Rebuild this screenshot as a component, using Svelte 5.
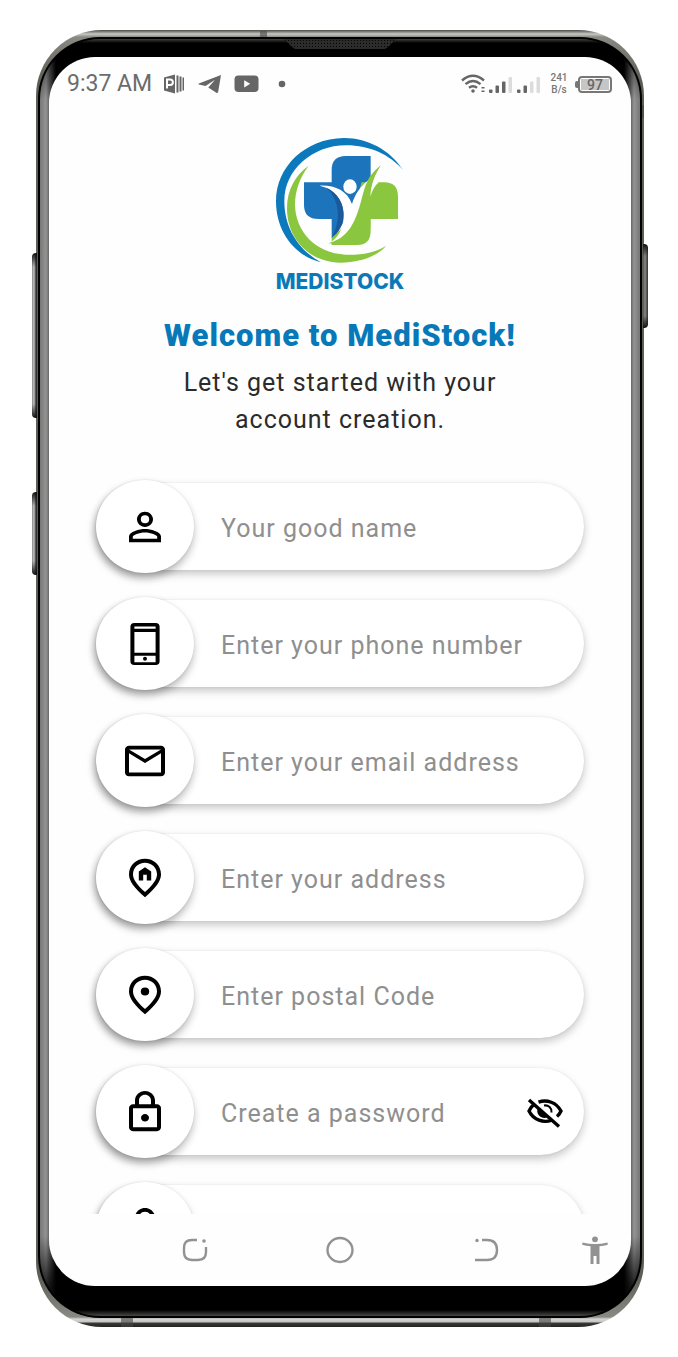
<script>
  const fields = [
    { id: 'name', label: 'Your good name', type: 'text', icon: 'person' },
    { id: 'phone', label: 'Enter your phone number', type: 'tel', icon: 'phone' },
    { id: 'email', label: 'Enter your email address', type: 'email', icon: 'mail' },
    { id: 'address', label: 'Enter your address', type: 'text', icon: 'home' },
    { id: 'postal', label: 'Enter postal Code', type: 'text', icon: 'pin' },
    { id: 'password', label: 'Create a password', type: 'password', icon: 'lock', secret: true },
    { id: 'confirm', label: 'Confirm password', type: 'password', icon: 'lock' }
  ];
  let visible = $state(false);
</script>

{#snippet fieldIcon(name)}
  <svg class="icon" viewBox="0 0 24 24" preserveAspectRatio="none" aria-hidden="true">
    {#if name === 'person'}
      <path d="M12 5.9a2.1 2.1 0 1 1 0 4.2 2.1 2.1 0 0 1 0-4.2m0 9c2.97 0 6.1 1.46 6.1 2.1v1.1H5.9V17c0-.64 3.13-2.1 6.1-2.1M12 4C9.79 4 8 5.79 8 8s1.79 4 4 4 4-1.790 4-4-1.790-4-4-4zm0 9c-2.67 0-8 1.340-8 4v3h16v-3c0-2.660-5.330-4-8-4z" />
    {:else if name === 'phone'}
      <path fill-rule="evenodd" d="M6.700 1h10.600a2 2 0 0 1 2 2v18a2 2 0 0 1-2 2H6.700a2 2 0 0 1-2-2V3a2 2 0 0 1 2-2zM6.700 2.900V4h10.600V2.900zM6.700 5.800v10.700h10.600V5.800zM6.700 18.100v3.400h10.600v-3.400z" />
      <circle cx="12" cy="19.700" r="1" />
    {:else if name === 'mail'}
      <path d="M20 4H4c-1.100 0-2 .9-2 2v12c0 1.100.9 2 2 2h16c1.100 0 2-.9 2-2V6c0-1.100-.9-2-2-2zm0 14H4V8l8 5 8-5v10zm-8-7L4 6h16l-8 5z" />
    {:else if name === 'lock'}
      <path d="M18 8h-1V6c0-2.760-2.240-5-5-5S7 3.240 7 6v2H6c-1.100 0-2 .9-2 2v10c0 1.100.9 2 2 2h12c1.100 0 2-.9 2-2V10c0-1.100-.9-2-2-2zM9 6c0-1.660 1.340-3 3-3s3 1.340 3 3v2H9V6zm9 14H6V10h12v10zm-6-3c1.100 0 2-.9 2-2s-.9-2-2-2-2 .9-2 2 .9 2 2 2z" />
    {:else}
      <path fill-rule="evenodd" d="M12 2c4.200 0 8 3.220 8 8.200 0 3.320-2.670 7.250-8 11.800-5.330-4.550-8-8.480-8-11.800C4 5.220 7.800 2 12 2zm6 8.200C18 6.570 15.350 4 12 4s-6 2.570-6 6.200c0 2.340 1.950 5.440 6 9.140 4.050-3.700 6-6.800 6-9.140z" />
      {#if name === 'home'}
        <path d="M8.900 13.300V8.600L12 6.400l3.100 2.200v4.700h-2.200v-3h-1.800v3z" />
      {:else}
        <circle cx="12" cy="10.200" r="2.100" />
      {/if}
    {/if}
  </svg>
{/snippet}

<main class="stage">
  <div class="phone">
    <i class="key volume"></i>
    <i class="key assist"></i>
    <i class="key power"></i>
    <i class="seam seam-top"></i>
    <i class="seam seam-side"></i>
    <i class="seam seam-left"></i>
    <i class="seam seam-right"></i>
    <div class="rim">
      <div class="bezel">
        <i class="speaker"></i>
        <div class="screen">
          <header class="status">
            <span class="clock">9:37 AM</span>
            <svg class="s-office" width="21" height="20" viewBox="0 0 21 20" aria-hidden="true">
              <path d="M0 3.500 11 .5v19L0 16.500z" />
              <path d="M12.500 1.500h2v17h-2zM15.500 2.500h2v15h-2zM18.500 3.500H20v13h-1.500z" />
              <path class="cut" d="M3 14.500V5.500h3.200a2.700 2.700 0 0 1 0 5.400H3" />
            </svg>
            <svg class="s-plane" width="24" height="20" viewBox="0 0 24 20" aria-hidden="true">
              <path d="M23 1 .8 9.500c-.6.300-.5.700.1.900l6.600 1.600L17 5.800 10.300 13.500l8 5.200c1 .5 1.700.2 1.900-.9z" />
            </svg>
            <svg class="s-video" width="25" height="18" viewBox="0 0 25 18" aria-hidden="true">
              <rect x=".5" y=".5" width="24" height="16.500" rx="4" />
              <path class="white" d="M10.200 5.200v7.200l6-3.600z" />
            </svg>
            <svg class="s-dot" width="8" height="8" viewBox="0 0 8 8" aria-hidden="true"><circle cx="4" cy="4" r="3.300" /></svg>
            <span class="grow"></span>
            <svg width="80" height="20" viewBox="0 0 80 20" aria-hidden="true">
              <g class="wifi">
                <path d="M1 6.500Q12 -3 23 6.500" />
                <path d="M4.500 10.200Q12 4 19.500 10.200" />
                <path d="M8 13.800Q12 10.500 16 13.800" />
              </g>
              <circle cx="12" cy="17" r="1.800" />
              <path d="M20.500 13h3v1.600h-3zM20.500 16.500h3v1.600h-3z" />
              <rect x="28" y="15.500" width="3.500" height="3.500" rx="1" />
              <rect x="34.500" y="11.500" width="3.500" height="7.500" rx="1" />
              <rect x="41" y="7.500" width="3.500" height="11.500" rx="1" />
              <rect class="faint" x="47.500" y="3" width="3.500" height="16" rx="1" />
              <rect x="56" y="15.500" width="3.500" height="3.500" rx="1" />
              <rect x="62.500" y="11.500" width="3.500" height="7.500" rx="1" />
              <rect class="faint" x="69" y="7.500" width="3.500" height="11.500" rx="1" />
              <rect class="faint" x="75.500" y="3" width="3.500" height="16" rx="1" />
            </svg>
            <span class="rate">241<br />B/s</span>
            <span class="battery"><b>97</b></span>
          </header>

          <div class="scroll">
            <div class="brand">
              <svg width="128" height="127" viewBox="47 36 384 381" aria-hidden="true">
                <path fill="#0b79bb" d="M428 135C390 75 320 38 250 39 135 41 47 125 47 228c0 92 55 164 135 184C115 375 72 310 72 228 72 135 155 61 258 61c70 0 130 28 170 74z" />
                <path fill="#8bc63f" d="M145 122C105 150 80 195 80 250c0 95 70 162 160 163 60 0 110-20 138-51-35 22-80 29-122 27C165 384 106 320 104 240c0-45 16-85 41-118z" />
                <path fill="#1c75bc" d="M131 172h83v-37q0-42 42-42h75v79l-56 68-30 60-31 40v-58h-39q-44 0-44-42z" />
                <path fill="#8bc63f" d="M331 172h41q41 0 41 43v67h-82v36q0 42-41 42h-76v-20l60-60 30-108z" />
                <path fill="#fff" d="M178 182c44-2 82 14 97 55 9-30 26-54 50-72l37-44-9 53c-25 18-40 60-53 96-18 48-45 78-95 85 30-15 47-50 45-92-3-40-32-72-72-81z" />
                <path fill="#1a5a9c" d="M196 187c36 17 55 47 53 84-1 30-12 52-35 68 14-28 20-53 18-78-2-30-14-55-36-74z" />
                <path fill="#8bc63f" d="M362 121c-14 10-31 28-40 46-14 28-18 62-30 95-16 46-38 80-88 93l86 5c22-8 40-30 40-60V215c2-34 16-66 32-94z" />
                <path fill="#fff" d="M362 121c-17 25-30 56-32 94 6-20 14-33 24-43z" />
                <ellipse cx="269" cy="185" rx="20" ry="22" fill="#fff" />
              </svg>
              <strong>MEDISTOCK</strong>
            </div>
            <h1>Welcome to MediStock!</h1>
            <p>Let's get started with your<br />account creation.</p>

            <form>
              {#each fields as field}
                <div class="field">
                  <label for={field.id} aria-label={field.label}>{@render fieldIcon(field.icon)}</label>
                  <div class="pill">
                    <input
                      id={field.id}
                      type={field.secret && visible ? 'text' : field.type}
                      placeholder={field.label}
                    />
                    {#if field.secret}
                      <button type="button" aria-label="Show password" onclick={() => (visible = !visible)}>
                        <svg width="36" height="31" viewBox="0 0 36 31" aria-hidden="true">
                          <path class="line" d="M11.500 4.200C20 1 29.500 4.500 34 13c-1 2.200-2.300 4-4 5.500M7.500 6.200C5 8 3 10.200 2 13c4.500 9 14.500 12.500 23 9" />
                          <path class="thin" d="M17 7.500c4.500-.8 8 2.700 7.500 7" />
                          <path d="M11 9.500c-2.500 5.500 1.500 11.500 8.500 10.300l2-.8z" />
                          <path class="line" d="M2 2l30 26.500" />
                        </svg>
                      </button>
                    {/if}
                  </div>
                </div>
              {/each}
            </form>
          </div>

          <nav>
            <button type="button" class="recent" aria-label="Recent apps">
              <svg width="28" height="26" viewBox="0 0 28 26" aria-hidden="true">
                <path d="M16 3h-5Q3 3 3 11v4q0 8 8 8h6q8 0 8-8v-5" />
                <circle cx="23" cy="4" r="1.800" />
              </svg>
            </button>
            <button type="button" aria-label="Home">
              <svg width="28" height="28" viewBox="0 0 28 28" aria-hidden="true"><ellipse cx="14" cy="14" rx="12.500" ry="12" /></svg>
            </button>
            <button type="button" aria-label="Back">
              <svg width="26" height="26" viewBox="0 0 26 26" aria-hidden="true">
                <path d="M9 3h5q10 0 10 10t-10 10H2" />
                <circle cx="4" cy="3.500" r="1.700" />
              </svg>
            </button>
            <button type="button" class="access" aria-label="Accessibility">
              <svg width="26" height="28" viewBox="0 0 26 28" aria-hidden="true">
                <circle cx="13" cy="3.300" r="2.900" />
                <path d="M.5 6.500Q13 9.500 25.500 6.500l.3 2.300Q21.500 10 17.500 10.300V28h-3v-8h-3v8h-3V10.300Q4.500 10 .2 8.800z" />
              </svg>
            </button>
          </nav>
        </div>
      </div>
    </div>
  </div>
</main>

<style>
  :global(body) {
    margin: 0;
    background: #fff;
  }
  .stage {
    box-sizing: border-box;
    height: 100vh;
    padding: 30px 34px 30px 36px;
    font-family: Roboto, 'Liberation Sans', sans-serif;
  }
  .phone {
    position: relative;
    box-sizing: border-box;
    height: 100%;
    padding: 7px 2px 9px;
    border-radius: 66px;
    display: flex;
    background:
      linear-gradient(#4a4a46, #8a8a84 2px, #c8c8c4 4px, #8a8a84 7px, transparent 50px),
      linear-gradient(to top, #222 0, #3a3a38 4px, #c4c6c4 5px, #d4d6d4 8px, #8a8a84 10px, transparent 50px),
      #5e5e56;
  }
  .rim {
    flex: 1;
    display: flex;
    padding: 2px;
    border-radius: 62px;
    background: #000;
  }
  .bezel {
    position: relative;
    flex: 1;
    display: flex;
    padding: 18px 9px 30px;
    border-radius: 60px;
    background:
      linear-gradient(rgba(70, 70, 70, 0.9), transparent 4px),
      linear-gradient(to top, rgba(80, 80, 80, 0.9), transparent 6px),
      linear-gradient(rgba(0, 0, 0, 0.8), transparent 60px),
      linear-gradient(to top, rgba(0, 0, 0, 0.8) 30px, transparent 80px),
      linear-gradient(to right, #777, #949494 6px, #000 16px, #000 calc(100% - 16px), #949494 calc(100% - 6px), #777);
  }
  .screen {
    flex: 1;
    min-width: 0;
    display: flex;
    flex-direction: column;
    overflow: hidden;
    border-radius: 46px;
    background: #fefefe;
  }
  .key {
    position: absolute;
    width: 5px;
    left: -4px;
    background: linear-gradient(#111, transparent 14px calc(100% - 14px), #111), linear-gradient(to right, #888, #c4c4c4 2px, #333 4px);
    border-radius: 4px 0 0 4px;
  }
  .volume {
    top: 223px;
    height: 165px;
  }
  .assist {
    top: 462px;
    height: 83px;
  }
  .power {
    left: auto;
    right: -4px;
    top: 214px;
    height: 84px;
    background: linear-gradient(#111, transparent 12px calc(100% - 12px), #111), linear-gradient(to left, #333, #888 3px, #555);
    border-radius: 0 4px 4px 0;
  }
  .seam {
    position: absolute;
    background: rgba(70, 70, 70, 0.6);
  }
  .seam-top {
    left: 224px;
    top: 1px;
    width: 7px;
    height: 6px;
  }
  .seam-side {
    right: 0;
    top: 75px;
    width: 2px;
    height: 13px;
  }
  .seam-left,
  .seam-right {
    bottom: 0;
    width: 12px;
    height: 9px;
    left: 85px;
  }
  .seam-right {
    left: auto;
    right: 93px;
  }
  .speaker {
    position: absolute;
    top: 0;
    left: 50%;
    width: 112px;
    height: 10px;
    transform: translateX(-50%);
    clip-path: polygon(0 0, 100% 0, 93% 80%, 90% 100%, 10% 100%, 7% 80%);
    background: radial-gradient(circle, #050505 1px, #2c2c2c 1px) 0 0 / 3px 3px;
  }

  .status {
    box-sizing: border-box;
    flex: none;
    height: 54px;
    padding: 0 19px 0 18px;
    display: flex;
    align-items: center;
    color: #6c6c6c;
  }
  .status svg {
    flex: none;
    fill: #666;
  }
  .clock {
    font-size: 23px;
    line-height: 28px;
    white-space: nowrap;
  }
  .s-office {
    margin-left: 12px;
  }
  .s-plane {
    margin-left: 13px;
  }
  .s-video {
    margin-left: 12px;
  }
  .s-dot {
    margin-left: 19px;
  }
  .status .cut {
    fill: none;
    stroke: #fff;
    stroke-width: 2;
  }
  .status .white {
    fill: #fff;
  }
  .status .faint {
    fill: #dcdcdc;
  }
  .status .wifi {
    fill: none;
    stroke: #666;
    stroke-width: 2.4;
  }
  .grow {
    flex: 1;
  }
  .rate {
    width: 20px;
    margin-left: 8px;
    font-size: 10px;
    line-height: 12px;
    font-weight: 500;
    text-align: center;
    color: #777;
  }
  .battery {
    position: relative;
    box-sizing: border-box;
    width: 34px;
    height: 17px;
    margin-left: 9px;
    padding: 1px;
    border: 2px solid #777;
    border-radius: 4px;
    display: flex;
  }
  .battery::before {
    content: '';
    position: absolute;
    left: -5px;
    top: 3px;
    width: 3px;
    height: 7px;
    border-radius: 2px 0 0 2px;
    background: #777;
  }
  .battery b {
    flex: 1;
    background: #c6c6c6;
    font-size: 14px;
    line-height: 12px;
    font-weight: 500;
    text-align: center;
    color: #666;
  }

  .scroll {
    flex: 1;
    min-height: 0;
    overflow: hidden auto;
    scrollbar-width: none;
    padding: 26px 47px 0;
    text-align: center;
  }
  .brand {
    display: flex;
    flex-direction: column;
    align-items: center;
    gap: 8px;
  }
  .brand strong {
    font-family: Inter, sans-serif;
    font-size: 21px;
    line-height: 20px;
    font-weight: 800;
    color: #0b79b8;
  }
  h1 {
    margin: 24px 0 8px;
    font-size: 31px;
    line-height: 40px;
    font-weight: 900;
    letter-spacing: 1px;
    white-space: nowrap;
    color: #0879b8;
  }
  p {
    margin: 0;
    font-size: 25px;
    line-height: 37px;
    letter-spacing: 1px;
    color: #2b2b2b;
  }
  form {
    display: flex;
    flex-direction: column;
    gap: 24px;
    margin-top: 42px;
  }
  .field {
    display: grid;
    grid-template-columns: 98px 1fr;
    align-items: center;
  }
  .field label {
    z-index: 1;
    grid-area: 1 / 1;
    height: 93px;
    border-radius: 50%;
    display: flex;
    align-items: center;
    justify-content: center;
    background: #fff;
    box-shadow: -1px 5px 9px rgba(0, 0, 0, 0.3), 0 0 2px rgba(0, 0, 0, 0.1);
  }
  .icon {
    width: 48px;
    height: 46px;
  }
  .pill {
    grid-area: 1 / 1 / 2 / 3;
    box-sizing: border-box;
    height: 87px;
    padding: 0 21px 0 125px;
    border-radius: 47px;
    display: flex;
    align-items: center;
    background: #fff;
    box-shadow: 0 4px 8px rgba(0, 0, 0, 0.22), 0 0 2px rgba(0, 0, 0, 0.08);
  }
  input {
    flex: 1;
    min-width: 0;
    padding: 4px 0 0;
    border: 0;
    outline: 0;
    background: none;
    font: 25px/32px Roboto, sans-serif;
    letter-spacing: 1px;
    color: #2b2b2b;
  }
  input::placeholder {
    color: #8f8f8f;
    opacity: 1;
  }
  button {
    padding: 0;
    border: 0;
    background: none;
    display: flex;
    align-items: center;
    justify-content: center;
  }
  .pill button {
    padding-top: 4px;
  }
  .line,
  .thin {
    fill: none;
    stroke: #000;
    stroke-width: 3.4;
  }
  .thin {
    stroke-width: 2;
  }

  nav {
    flex: none;
    height: 72px;
    display: grid;
    grid-template-columns: 1fr 2fr 2fr 2fr 1fr;
    align-items: center;
  }
  nav svg {
    fill: none;
    stroke: #929292;
    stroke-width: 2.4;
  }
  nav circle,
  .access svg {
    fill: #929292;
    stroke: none;
  }
  .recent {
    grid-column: 2;
  }
</style>
